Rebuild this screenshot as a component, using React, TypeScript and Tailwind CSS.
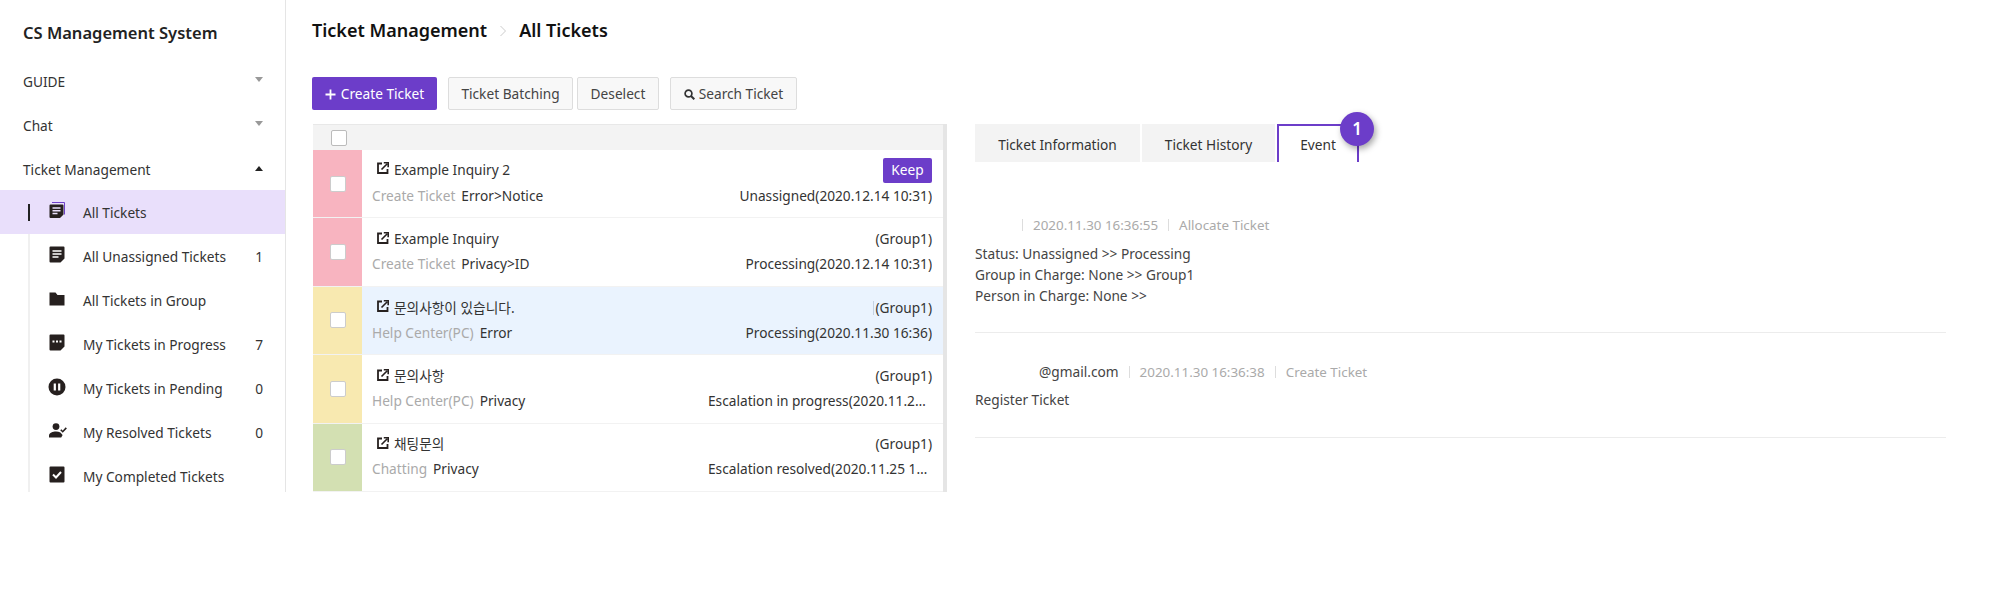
import { ReactNode } from "react";

const FONT = "font-['Noto_Sans','Noto_Sans_CJK_KR',sans-serif]";

function DocStack() {
    return (
        <svg width="17" height="17" viewBox="0 0 17 17">
            <path d="M3 0.5h12.5v12" fill="none" stroke="#6d3fc8" strokeWidth="1" />
            <path d="M0.5 3.5a1 1 0 0 1 1-1h12a1 1 0 0 1 1 1v9l-3.5 3.5H1.5a1 1 0 0 1-1-1z" fill="#26201f" />
            <path d="M3.5 6h8M3.5 8.7h8M3.5 11.4h5" stroke="#e9dffb" strokeWidth="1.5" />
        </svg>
    );
}

function Doc() {
    return (
        <svg width="16" height="17" viewBox="0 0 16 17">
            <path d="M0.5 1.5a1 1 0 0 1 1-1h13a1 1 0 0 1 1 1v11l-4 4h-10a1 1 0 0 1-1-1z" fill="#26201f" />
            <path d="M3.5 5h9M3.5 8h9M3.5 11h6" stroke="#fff" strokeWidth="1.5" />
        </svg>
    );
}

function Folder() {
    return (
        <svg width="16" height="14" viewBox="0 0 16 14">
            <path d="M0.5 0.5h6l2 2.5h7v10.5h-15z" fill="#26201f" />
        </svg>
    );
}

function DocDots() {
    return (
        <svg width="16" height="17" viewBox="0 0 16 17">
            <path d="M0.5 1.5a1 1 0 0 1 1-1h13a1 1 0 0 1 1 1v11l-4 4h-10a1 1 0 0 1-1-1z" fill="#26201f" />
            <path d="M3.5 7.5h2M7 7.5h2M10.5 7.5h2" stroke="#fff" strokeWidth="2" />
        </svg>
    );
}

function Pause() {
    return (
        <svg width="18" height="18" viewBox="0 0 18 18" className="-ml-px">
            <circle cx="9" cy="9" r="8.5" fill="#26201f" />
            <path d="M6.8 5.5v7M11.2 5.5v7" stroke="#fff" strokeWidth="2.2" />
        </svg>
    );
}

function UserCheck() {
    return (
        <svg width="18" height="15" viewBox="0 0 18 15">
            <circle cx="7" cy="3.6" r="3.4" fill="#26201f" />
            <path d="M0 14.5v-2c0-2.6 4-4 7-4 1.6 0 3.2.3 4.4.9l2.2 2.6-1.4 2.5z" fill="#26201f" />
            <path d="M11.8 6.8l1.9 1.9 3.6-3.8" fill="none" stroke="#26201f" strokeWidth="1.6" />
        </svg>
    );
}

function CheckBoxIcon() {
    return (
        <svg width="16" height="17" viewBox="0 0 16 17">
            <path d="M0.5 1.5a1 1 0 0 1 1-1h13a1 1 0 0 1 1 1v14a1 1 0 0 1-1 1h-13a1 1 0 0 1-1-1z" fill="#26201f" />
            <path d="M4 8.5l3 3 5-5.5" fill="none" stroke="#fff" strokeWidth="2" />
        </svg>
    );
}

function OpenIcon() {
    return (
        <svg width="12" height="12" viewBox="0 0 12 12" className="mb-[3px] shrink-0">
            <path d="M5 1.5H1v9.5h9.5V7" fill="none" stroke="#26201f" strokeWidth="1.8" />
            <path d="M4.5 7.5L10 2M6.8 0.8h4.4v4.4" fill="none" stroke="#26201f" strokeWidth="1.6" />
        </svg>
    );
}

function SearchIcon() {
    return (
        <svg width="11" height="11" viewBox="0 0 11 11">
            <circle cx="4.5" cy="4.5" r="3.4" fill="none" stroke="#333" strokeWidth="1.7" />
            <path d="M7 7l3.3 3.3" stroke="#333" strokeWidth="2" />
        </svg>
    );
}

function MenuHead({ label, open }: { label: string; open?: boolean }) {
    return (
        <div className="flex h-[44px] items-center justify-between pl-[23px] pr-[22px] text-[13.7px] text-[#333]">
            <span className="pt-[5px]">{label}</span>
            {open ? (
                <span className="border-x-[4px] border-b-[5px] border-x-transparent border-b-[#222]" />
            ) : (
                <span className="mb-[2px] border-x-[4px] border-t-[5px] border-x-transparent border-t-[#999]" />
            )}
        </div>
    );
}

function SubItem({ icon, label, count, active }: { icon: ReactNode; label: string; count?: string; active?: boolean }) {
    return (
        <div className={`relative flex h-[44px] items-center pr-[22px] text-[13.7px] text-[#333] ${active ? "bg-[#e9dffb]" : ""}`}>
            {active && <span className="absolute left-[28px] top-[14px] h-[17px] w-[2px] bg-[#222]" />}
            <span className="mb-[3px] flex w-[83px] shrink-0 justify-start pl-[49px]">{icon}</span>
            <span className="flex-1 pt-[2px]">{label}</span>
            {count && <span className="pt-[2px]">{count}</span>}
        </div>
    );
}

function Sidebar() {
    return (
        <aside className="relative h-[492px] w-[286px] shrink-0 overflow-hidden border-r border-[#e5e5e5]">
            <div className="flex h-[58px] items-center pl-[23px] pt-[8px] text-[16.5px] font-semibold text-[#222]">CS Management System</div>
            <MenuHead label="GUIDE" />
            <MenuHead label="Chat" />
            <MenuHead label="Ticket Management" open />
            <div className="relative">
                <span className="absolute bottom-0 left-[28px] top-[44px] w-[2px] bg-[#f0f0f0]" />
                <SubItem icon={<DocStack />} label="All Tickets" active />
                <SubItem icon={<Doc />} label="All Unassigned Tickets" count="1" />
                <SubItem icon={<Folder />} label="All Tickets in Group" />
                <SubItem icon={<DocDots />} label="My Tickets in Progress" count="7" />
                <SubItem icon={<Pause />} label="My Tickets in Pending" count="0" />
                <SubItem icon={<UserCheck />} label="My Resolved Tickets" count="0" />
                <SubItem icon={<CheckBoxIcon />} label="My Completed Tickets" />
            </div>
        </aside>
    );
}

function Btn({ children, className }: { children: ReactNode; className: string }) {
    return (
        <button className={`flex h-[33px] items-center justify-center gap-[4px] rounded-[2px] border border-[#ddd] bg-[#f8f8f8] pt-px text-[13.7px] text-[#444] ${className}`}>
            {children}
        </button>
    );
}

type Ticket = {
    color: string;
    title: string;
    source: string;
    category: string;
    status: string;
    group?: string;
    keep?: boolean;
    selected?: boolean;
};

const tickets: Ticket[] = [
    { color: "bg-[#f8b4c0]", title: "Example Inquiry 2", source: "Create Ticket", category: "Error>Notice", status: "Unassigned(2020.12.14 10:31)", keep: true },
    { color: "bg-[#f8b4c0]", title: "Example Inquiry", source: "Create Ticket", category: "Privacy>ID", status: "Processing(2020.12.14 10:31)", group: "(Group1)" },
    { color: "bg-[#f8e9b0]", title: "문의사항이 있습니다.", source: "Help Center(PC)", category: "Error", status: "Processing(2020.11.30 16:36)", group: "(Group1)", selected: true },
    { color: "bg-[#f8e9b0]", title: "문의사항", source: "Help Center(PC)", category: "Privacy", status: "Escalation in progress(2020.11.25 16:36)", group: "(Group1)" },
    { color: "bg-[#d3e0b2]", title: "채팅문의", source: "Chatting", category: "Privacy", status: "Escalation resolved(2020.11.25 16:36)", group: "(Group1)" },
];

function TicketRow({ t }: { t: Ticket }) {
    return (
        <div className={`flex h-[68.4px] shrink-0 border-b border-[#f2f2f2] ${t.selected ? "bg-[#eaf3fe]" : "bg-white"}`}>
            <div className={`flex w-[49px] shrink-0 items-center justify-center ${t.color}`}>
                <span className="h-[16px] w-[16px] rounded-[2px] border border-[#ccc] bg-white" />
            </div>
            <div className={`flex min-w-0 flex-1 flex-col pl-[10px] pr-[11px] text-[13.7px] ${t.keep ? "pt-[7px]" : "pt-[9px]"}`}>
                <div className={`flex items-center justify-between ${t.keep ? "h-[26px]" : "h-[24px]"}`}>
                    <div className="flex items-center gap-[5px] pl-[5px] text-[#333]">
                        <OpenIcon />
                        <span>{t.title}</span>
                    </div>
                    {t.keep && <span className="flex h-[25px] w-[49px] items-center justify-center rounded-[2px] bg-[#6c3dc9] text-white">Keep</span>}
                    {t.group && (
                        <div className="flex items-center gap-px text-[#333]">
                            {t.selected && <span className="h-[14px] w-px bg-[#c5d2e2]" />}
                            <span>{t.group}</span>
                        </div>
                    )}
                </div>
                <div className="flex h-[26px] items-center justify-between">
                    <div className="flex shrink-0 gap-[6px]">
                        <span className="text-[#aaa]">{t.source}</span>
                        <span className="text-[#333]">{t.category}</span>
                    </div>
                    <span className="w-[224px] truncate text-right text-[#333]">{t.status}</span>
                </div>
            </div>
        </div>
    );
}

function TicketList() {
    return (
        <div className="flex h-[368px] w-[635px] flex-col overflow-hidden border-r-[4px] border-[#e5e5e5] pl-px">
            <div className="flex h-[26px] shrink-0 items-center border-t border-[#e8e8e8] bg-[#f3f3f3] pl-[18px]">
                <span className="h-[16px] w-[16px] rounded-[2px] border border-[#bbb] bg-white" />
            </div>
            {tickets.map((t) => (
                <TicketRow key={t.title} t={t} />
            ))}
            <div className="h-[2px] w-[49px] shrink-0 bg-[#f8b4c0]" />
        </div>
    );
}

function Sep() {
    return <span className="mx-[10px] h-[12px] w-px bg-[#ddd]" />;
}

function Tabs() {
    return (
        <div className="flex h-[38px] gap-[2px] text-[13.7px] text-[#333]">
            <div className="flex w-[165px] items-center justify-center bg-[#f3f3f3] pt-[4px]">Ticket Information</div>
            <div className="flex w-[133px] items-center justify-center bg-[#f3f3f3] pt-[4px]">Ticket History</div>
            <div className="relative flex w-[82px] items-center justify-center border-x-2 border-t-2 border-[#6c3dc9] bg-white pt-[3px]">
                Event
                <span className="absolute -right-[17px] -top-[14px] flex h-[34px] w-[34px] items-center justify-center rounded-full bg-[#6c3dc9] text-[17px] font-semibold text-white shadow-[2px_3px_6px_rgba(0,0,0,0.35)]">
                    1
                </span>
            </div>
        </div>
    );
}

function DetailPane() {
    return (
        <div className="w-[971px] text-[13.7px] text-[#444]">
            <Tabs />
            <div className="border-b border-[#ececec] pb-[26px] pt-[53px]">
                <div className="flex h-[20px] items-center pl-[47px] text-[13.4px] text-[#aaa]">
                    <span className="mr-[10px] h-[12px] w-px bg-[#ddd]" />
                    <span>2020.11.30 16:36:55</span>
                    <Sep />
                    <span>Allocate Ticket</span>
                </div>
                <div className="mt-[8px] leading-[21px]">
                    <p>Status: Unassigned &gt;&gt; Processing</p>
                    <p>Group in Charge: None &gt;&gt; Group1</p>
                    <p>Person in Charge: None &gt;&gt;</p>
                </div>
            </div>
            <div className="border-b border-[#ececec] pb-[27px] pt-[29px]">
                <div className="flex h-[20px] items-center pl-[64px]">
                    <span>@gmail.com</span>
                    <Sep />
                    <span className="text-[13.4px] text-[#aaa]">2020.11.30 16:36:38</span>
                    <Sep />
                    <span className="text-[13.4px] text-[#aaa]">Create Ticket</span>
                </div>
                <p className="mt-[7px] leading-[21px]">Register Ticket</p>
            </div>
        </div>
    );
}

export default function App() {
    return (
        <div className={`flex h-[589px] w-[2000px] overflow-hidden bg-white ${FONT}`}>
            <Sidebar />
            <main className="flex-1 pl-[26px]">
                <div className="flex h-[60px] items-center pt-[1px] text-[18px] font-semibold text-[#111]">
                    <span>Ticket Management</span>
                    <svg width="8" height="12" viewBox="0 0 8 12" className="mx-[12px]">
                        <path d="M1.5 1l5 5-5 5" fill="none" stroke="#ccc" strokeWidth="1" />
                    </svg>
                    <span>All Tickets</span>
                </div>
                <div className="mt-[17px] flex">
                    <button className="flex h-[33px] w-[125px] items-center justify-center gap-[5px] rounded-[2px] bg-[#6c3dc9] pt-px text-[13.7px] text-white">
                        <svg width="11" height="11" viewBox="0 0 11 11">
                            <path d="M5.5 0.5v10M0.5 5.5h10" stroke="#fff" strokeWidth="1.8" />
                        </svg>
                        Create Ticket
                    </button>
                    <Btn className="ml-[11px] w-[125px]">Ticket Batching</Btn>
                    <Btn className="ml-[4px] w-[82px]">Deselect</Btn>
                    <Btn className="ml-[11px] w-[127px]">
                        <SearchIcon />
                        Search Ticket
                    </Btn>
                </div>
                <div className="mt-[14px] flex gap-[28px]">
                    <TicketList />
                    <DetailPane />
                </div>
            </main>
        </div>
    );
}
